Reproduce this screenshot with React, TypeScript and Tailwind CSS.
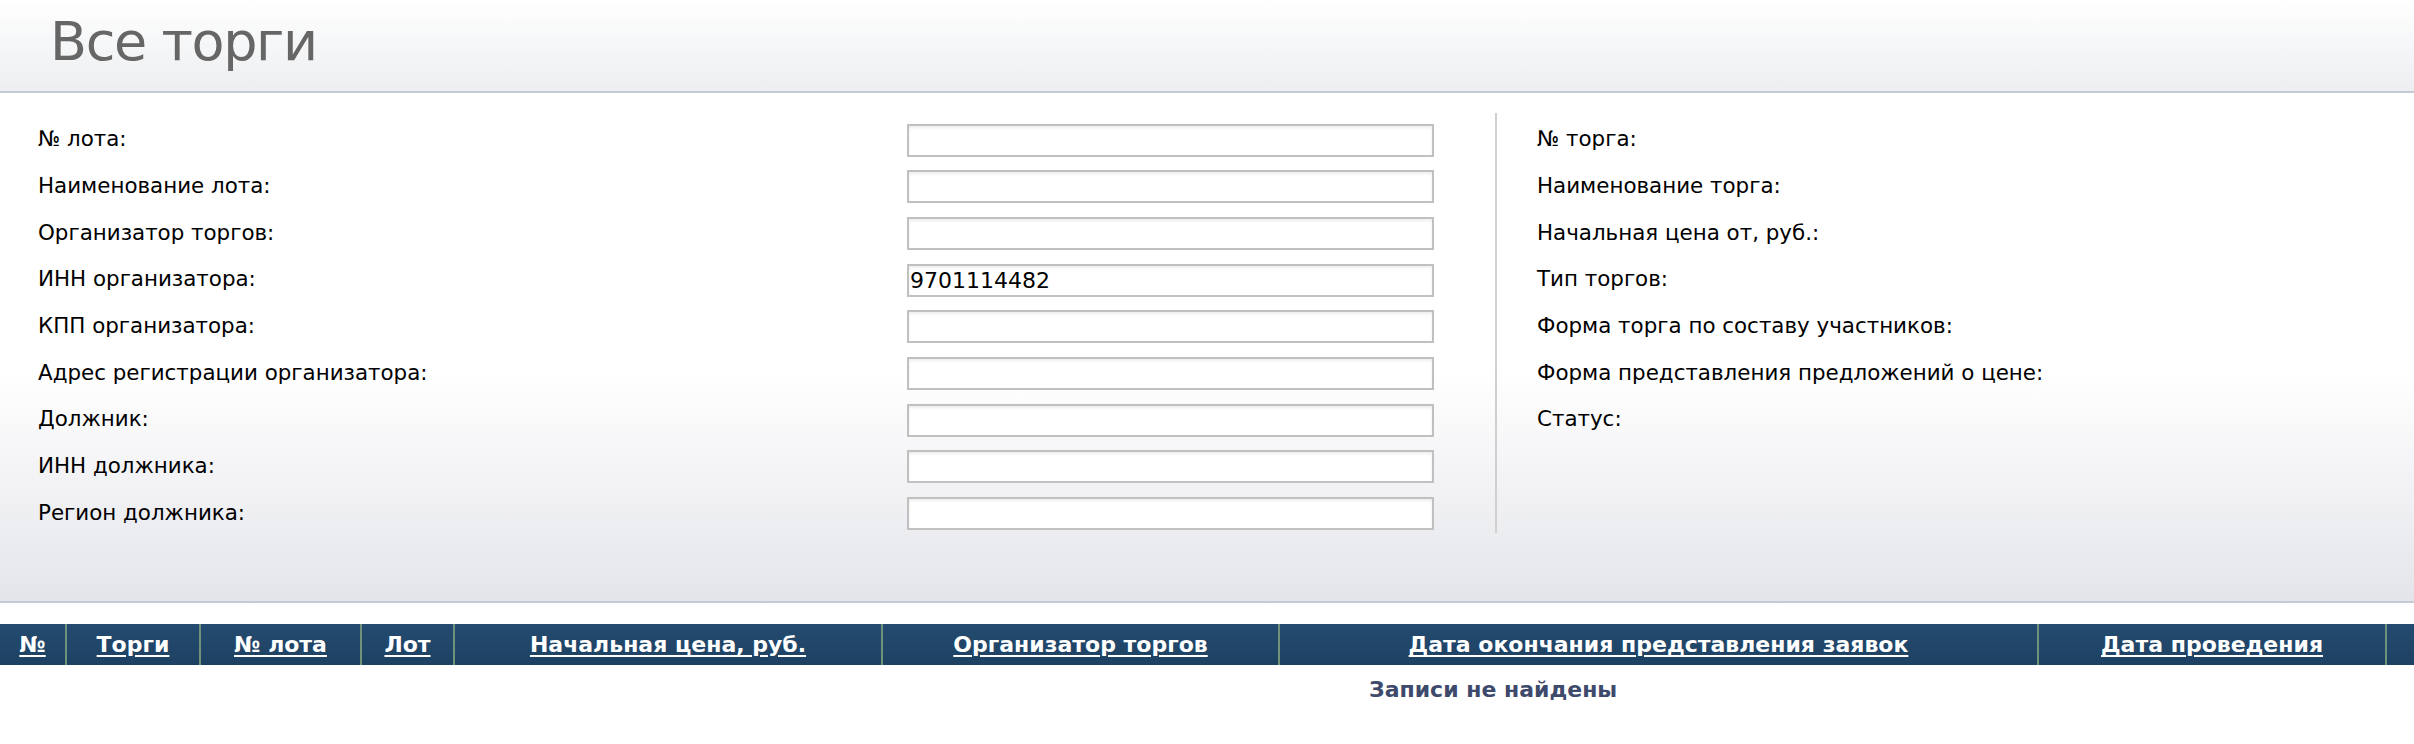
import React from 'react'

const leftFields = [
  { label: '№ лота:', value: '' },
  { label: 'Наименование лота:', value: '' },
  { label: 'Организатор торгов:', value: '' },
  { label: 'ИНН организатора:', value: '9701114482' },
  { label: 'КПП организатора:', value: '' },
  { label: 'Адрес регистрации организатора:', value: '' },
  { label: 'Должник:', value: '' },
  { label: 'ИНН должника:', value: '' },
  { label: 'Регион должника:', value: '' },
]

const rightFields = [
  '№ торга:',
  'Наименование торга:',
  'Начальная цена от, руб.:',
  'Тип торгов:',
  'Форма торга по составу участников:',
  'Форма представления предложений о цене:',
  'Статус:',
]

const columns = [
  { title: '№', w: 'w-[65px]' },
  { title: 'Торги', w: 'w-[134px]' },
  { title: '№ лота', w: 'w-[161px]' },
  { title: 'Лот', w: 'w-[93px]' },
  { title: 'Начальная цена, руб.', w: 'w-[428px]' },
  { title: 'Организатор торгов', w: 'w-[397px]' },
  { title: 'Дата окончания представления заявок', w: 'w-[759px]' },
  { title: 'Дата проведения', w: 'w-[348px]' },
  { title: '', w: 'flex-1' },
]

export default function App() {
  return (
    <div className="w-[2414px] h-[744px] bg-white font-['DejaVu_Sans',sans-serif] text-black">
      {/* заголовок */}
      <div className="h-[93px] border-b-2 border-[#c4cbd5] bg-gradient-to-b from-white to-[#eceef1] pl-[50px] pt-[15px]">
        <h1 className="text-[54px] leading-none tracking-[-1.4px] text-[#666666]">Все торги</h1>
      </div>

      {/* фильтры */}
      <div className="h-[510px] border-b-2 border-[#c4cbd5] bg-[linear-gradient(to_bottom,#ffffff_0%,#ffffff_55%,#e4e5ea_100%)] pt-[20px]">
        <div className="flex">
          <div className="w-[1495px] pl-[38px] pt-[4px]">
            {leftFields.map((f) => (
              <div key={f.label} className="flex h-[46.67px] items-center">
                <div className="w-[869px] pb-[2px] text-[21.4px]">{f.label}</div>
                <input
                  readOnly
                  value={f.value}
                  className="h-[33px] w-[527px] border-2 border-[#c0c0c0] bg-white px-[1px] font-['DejaVu_Sans',sans-serif] text-[22px] text-black shadow-[inset_0_2px_3px_rgba(0,0,0,0.07)] outline-none"
                />
              </div>
            ))}
          </div>
          <div className="h-[420px] w-[2px] bg-[#cfcfcf]" />
          <div className="pl-[40px] pt-[4px]">
            {rightFields.map((l) => (
              <div key={l} className="flex h-[46.67px] items-center pb-[2px] text-[21.4px]">
                {l}
              </div>
            ))}
          </div>
        </div>
      </div>

      {/* таблица */}
      <div className="pt-[21px]">
        <div className="flex h-[41px] bg-gradient-to-b from-[#244b70] to-[#1d4162]">
          {columns.map((c, i) => (
            <div
              key={i}
              className={`${c.w} flex items-center justify-center ${i > 0 ? 'border-l-2 border-[#6f9278]' : ''}`}
            >
              {c.title && (
                <a href="#" className="text-[22px] font-bold text-white underline underline-offset-[3px]">
                  {c.title}
                </a>
              )}
            </div>
          ))}
        </div>
        <div className="flex h-[48px] items-center pl-[1369px]">
          <span className="text-[22px] font-bold text-[#3d4a6c]">Записи не найдены</span>
        </div>
      </div>
    </div>
  )
}
